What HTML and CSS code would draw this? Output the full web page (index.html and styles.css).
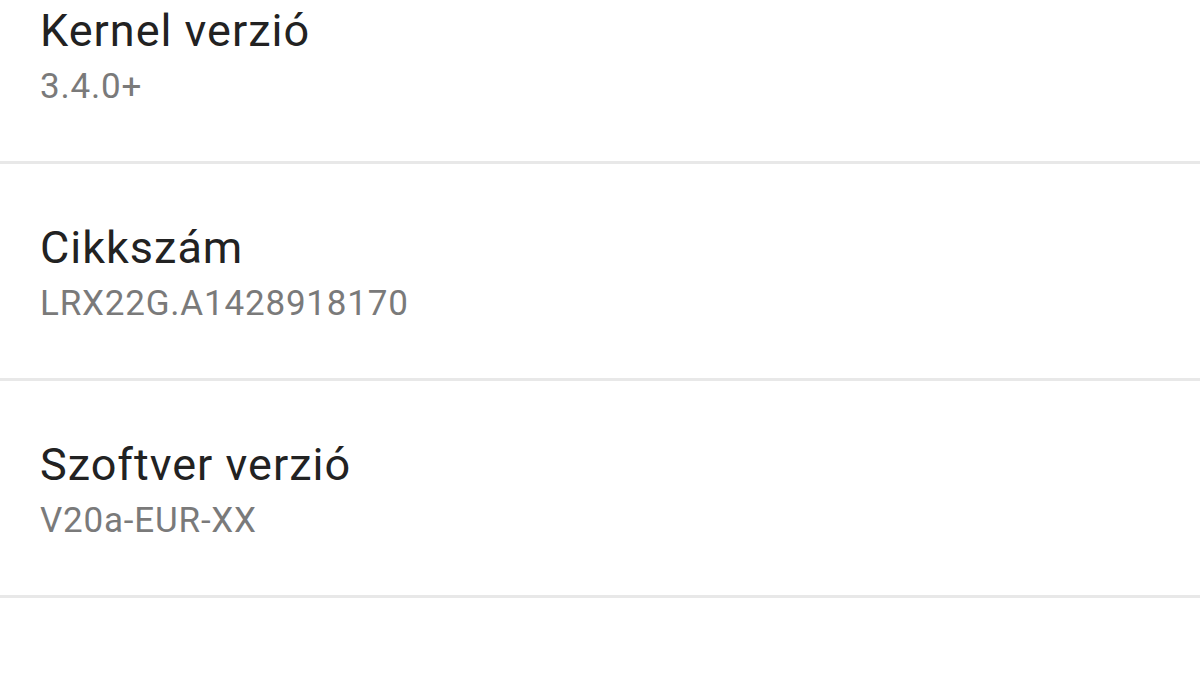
FILE: index.html
```html
<!DOCTYPE html>
<html lang="hu">

<head>
    <meta charset="UTF-8">
    <meta name="viewport" content="width=device-width, initial-scale=1.0">
    <title>Szoftver információ</title>
    <link rel="stylesheet" href="styles.css">
</head>

<body>
    <ul class="list">
        <li class="row">
            <p class="title">Kernel verzió</p>
            <p class="sub">3.4.0+</p>
        </li>
        <li class="row">
            <p class="title">Cikkszám</p>
            <p class="sub">LRX22G.A1428918170</p>
        </li>
        <li class="row">
            <p class="title">Szoftver verzió</p>
            <p class="sub">V20a-EUR-XX</p>
        </li>
    </ul>
</body>

</html>
```

FILE: styles.css
```css
* {
    padding: 0;
    margin: 0;
    list-style: none;
}

body {
    background-color: #fff;
    font-family: Roboto, "Noto Sans", sans-serif;
}

/* the list is scrolled a bit, first row is cut at the top */
.list {
    margin-top: -53px;
}

.row {
    height: 217px;
    padding: 58px 40px 0;
    box-sizing: border-box;
    border-bottom: 3px solid #e8e8e8;
}

.title {
    font-size: 45px;
    line-height: 52px;
    letter-spacing: 1px;
    color: #222;
}

.sub {
    margin-top: 8px;
    font-size: 35px;
    line-height: 44px;
    letter-spacing: 0.8px;
    color: #7a7a7a;
}
```
